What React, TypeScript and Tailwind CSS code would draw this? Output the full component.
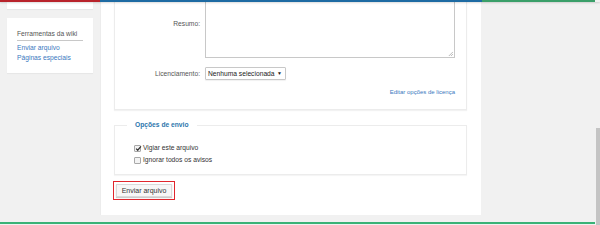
import React from "react";

function Check({ checked }: { checked?: boolean }) {
  return (
    <span className="relative inline-flex w-[7px] h-[7px] border border-[#a8a8a8] bg-[#f3f3f3] rounded-[1px] items-center justify-center">
      {checked && (
        <svg viewBox="0 0 8 8" className="w-[7px] h-[7px] absolute left-0 top-[-1px]">
          <path d="M1.3 4.2 L3.1 6 L6.8 1.6" fill="none" stroke="#333" strokeWidth="1.4" />
        </svg>
      )}
    </span>
  );
}

export default function App() {
  return (
    <div className="relative w-[600px] h-[225px] bg-[#f1f1f1] overflow-hidden font-['Liberation_Sans',Arial,sans-serif] text-[6.7px] leading-[10px] text-[#444]">
      {/* top colour bar */}
      <div className="flex h-[2px] shadow-[0_1px_2px_rgba(0,0,0,0.15)] relative z-10">
        <div className="w-[100px] bg-[#b8232b]" />
        <div className="w-[382px] bg-[#1e6ba3]" />
        <div className="w-[113px] bg-[#3a9f69]" />
        <div className="flex-1" />
      </div>

      <div className="flex">
        {/* sidebar */}
        <div className="w-[100px] px-[7px] flex flex-col">
          <div className="h-[7px] bg-white shadow-[0_1px_1px_rgba(0,0,0,0.04)]" />
          <div className="mt-[9px] h-[55px] bg-white shadow-[0_1px_1px_rgba(0,0,0,0.04)] px-[10px] pt-[11px]">
            <div className="w-[66px] border-b border-[#c8c8c8] pb-[1px] text-[#555] whitespace-nowrap">Ferramentas da wiki</div>
            <div className="mt-[2px] text-[#3a78c0]">Enviar arquivo</div>
            <div className="text-[#3a78c0]">Páginas especiais</div>
          </div>
        </div>

        {/* main content */}
        <div className="w-[381px] h-[213px] bg-white border-l border-[#ececec] overflow-hidden pl-[13px] pr-[14px]">
          <div className="-mt-[10px] border border-[#ececec] shadow-[0_1px_1px_rgba(0,0,0,0.05)] pt-[5px] pr-[11px] pb-[12px]">
            <div className="flex items-start">
              <div className="w-[85px] text-right pt-[21px] text-[#555]">Resumo:</div>
              <div className="ml-[5px] relative w-[250px] h-[60px] border border-[#c8c8c8] bg-white">
                <svg viewBox="0 0 6 6" className="absolute right-[1px] bottom-[1px] w-[5px] h-[5px]">
                  <path d="M6 1 L1 6 M6 3.5 L3.5 6" stroke="#999" strokeWidth="0.8" />
                </svg>
              </div>
            </div>
            <div className="flex items-center mt-[9px]">
              <div className="w-[85px] text-right text-[#555]">Licenciamento:</div>
              <div className="ml-[5px] w-[81px] h-[13px] border border-[#c8c8c8] rounded-[1px] bg-white flex items-center justify-between pl-[2px] pr-[3px] text-[#222] shadow-[0_1px_1px_rgba(0,0,0,0.06)] whitespace-nowrap overflow-hidden">
                <span>Nenhuma selecionada</span>
                <span className="text-[5px] leading-[5px]">▼</span>
              </div>
            </div>
            <div className="mt-[7px] text-right text-[6px] text-[#3a78c0]">Editar opções de licença</div>
          </div>

          <fieldset className="mt-[10px] h-[55px] border border-[#ececec] px-[12px] shadow-[0_1px_1px_rgba(0,0,0,0.04)]">
            <legend className="px-[8px] font-bold text-[#2d76ad]">Opções de envio</legend>
            <div className="pl-[7px] mt-[13px] flex flex-col gap-[2px]">
              <div className="flex items-center gap-[2px] text-[#333]">
                <Check checked />
                <span>Vigiar este arquivo</span>
              </div>
              <div className="flex items-center gap-[2px] text-[#333]">
                <Check />
                <span>Ignorar todos os avisos</span>
              </div>
            </div>
          </fieldset>

          <div className="mt-[6px] -ml-[1px] w-[62px] h-[19px] border-[1.5px] border-[#e0262d] flex items-center justify-center">
            <div className="w-[56px] h-[13px] bg-[#f7f7f7] border border-[#dadada] shadow-[0_1px_1px_rgba(0,0,0,0.2)] flex items-center justify-center text-[7px] text-[#333]">
              Enviar arquivo
            </div>
          </div>
        </div>
      </div>

      {/* footer green line */}
      <div className="absolute left-0 top-[222px] w-[595px] h-[2px] bg-[#3ab277]" />
      {/* scrollbar thumb */}
      <div className="absolute right-0 top-[128px] w-[4px] h-[97px] bg-[#c4c4c4]" />
    </div>
  );
}
